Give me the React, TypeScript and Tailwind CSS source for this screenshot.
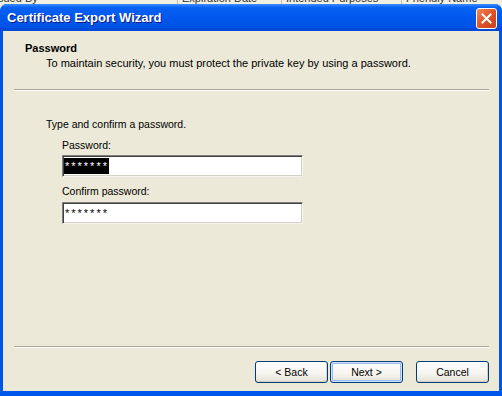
import React from "react";

const font = "font-['Liberation_Sans',Arial,sans-serif]";

function XpButton({ label, focused }: { label: string; focused?: boolean }) {
  return (
    <button
      className={`w-[73px] h-[22px] rounded-[3px] border border-[#003c74] bg-[linear-gradient(to_bottom,#ffffff_0%,#f5f4ef_60%,#e3e1d6_100%)] text-[10.5px] text-black leading-none flex items-center justify-center ${
        focused ? "shadow-[inset_0_0_0_1px_#cee7ff,inset_0_0_0_2px_#98b8f2]" : "shadow-[inset_-1px_-1px_0_#d6d0c5]"
      }`}
    >
      {label}
    </button>
  );
}

function PasswordField({ selected }: { selected?: boolean }) {
  return (
    <div className="w-[241px] h-[22px] bg-white border border-t-[#808080] border-l-[#808080] border-r-[#f5f4ef] border-b-[#f5f4ef] shadow-[inset_1px_1px_0_#404040,inset_-1px_-1px_0_#d4d0c8] flex items-center px-[1px]">
      <span
        className={`text-[11px] leading-[16px] pl-[1px] tracking-[2px] ${
          selected ? "bg-black text-white" : "text-black"
        }`}
      >
        *******
      </span>
    </div>
  );
}

export default function App() {
  return (
    <div className={`w-[502px] h-[396px] overflow-hidden bg-[#f1efe2] flex flex-col ${font}`}>
      {/* list header of the window behind, mostly hidden */}
      <div className="h-[4px] overflow-hidden">
        <div className="flex -mt-[9px] h-[14px] text-[11px] text-[#333] leading-[14px]">
          <div className="w-[180px] border-r border-[#c0bdb0] -ml-[2px]">sued By</div>
          <div className="w-[104px] pl-[4px] border-r border-[#c0bdb0]">Expiration Date</div>
          <div className="w-[120px] pl-[4px] border-r border-[#c0bdb0]">Intended Purposes</div>
          <div className="pl-[4px]">Friendly Name</div>
        </div>
      </div>

      <div className="flex-1 flex flex-col rounded-t-[7px] overflow-hidden bg-[#0055ea]">
        {/* title bar */}
        <div className="h-[27px] shrink-0 flex items-center justify-between pl-[7px] pr-[5px] bg-[linear-gradient(to_bottom,#3d8fff_0%,#0a62f4_12%,#0058ee_45%,#0054e8_80%,#0046d2_100%)]">
          <span className="text-white font-bold text-[13px] [text-shadow:1px_1px_0_#0a1a86] pt-[1px]">
            Certificate Export Wizard
          </span>
          <div className="w-[21px] h-[21px] rounded-[3px] border border-white bg-[linear-gradient(135deg,#f08a5e_0%,#e0522a_50%,#c8401c_100%)] flex items-center justify-center mt-[1px]">
            <svg width="11" height="11" viewBox="0 0 11 11">
              <path d="M1.5 1.5 L9.5 9.5 M9.5 1.5 L1.5 9.5" stroke="white" strokeWidth="2" strokeLinecap="square" />
            </svg>
          </div>
        </div>

        {/* client area */}
        <div className="flex-1 mx-[3px] mb-[5px] bg-[#ece9d8] flex flex-col text-black">
          <div className="pl-[22px] mt-[10px] text-[11px] font-bold leading-[14px]">Password</div>
          <div className="pl-[43px] mt-[1px] text-[11px] leading-[14px]">
            To maintain security, you must protect the private key by using a password.
          </div>
          <div className="ml-[11px] mr-[10px] mt-[19px] border-t border-[#aca899] border-b border-b-white" />

          <div className="pl-[43px] mt-[26px] text-[10.5px] leading-[14px]">Type and confirm a password.</div>
          <div className="pl-[59px] flex flex-col">
            <div className="mt-[7px] text-[10.5px] leading-[14px]">Password:</div>
            <div className="mt-[3px]">
              <PasswordField selected />
            </div>
            <div className="mt-[7px] text-[10.5px] leading-[14px]">Confirm password:</div>
            <div className="mt-[4px]">
              <PasswordField />
            </div>
          </div>

          <div className="flex-1" />
          <div className="ml-[11px] mr-[10px] border-t border-[#aca899] border-b border-b-white" />
          <div className="flex justify-end mt-[13px] mb-[8px] pr-[10px]">
            <XpButton label="< Back" />
            <div className="ml-[2px]">
              <XpButton label="Next >" focused />
            </div>
            <div className="ml-[13px]">
              <XpButton label="Cancel" />
            </div>
          </div>
        </div>
      </div>
    </div>
  );
}
